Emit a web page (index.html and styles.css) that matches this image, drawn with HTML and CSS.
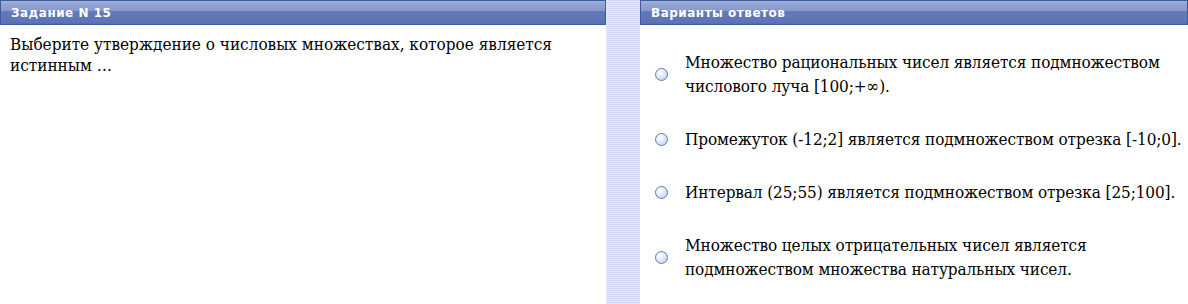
FILE: index.html
```html
<!DOCTYPE html>
<html lang="ru">
  <head>
    <meta charset="UTF-8" />
    <title>Задание N 15</title>
    <link rel="stylesheet" href="styles.css">
  </head>
  <body>
    <div class="test">
      <section class="panel task">
        <div class="panel-title">Задание N 15</div>
        <p class="question">
          Выберите утверждение о числовых множествах, которое является
          истинным …
        </p>
      </section>

      <div class="divider"></div>

      <section class="panel answers">
        <div class="panel-title">Варианты ответов</div>
        <ul class="options">
          <li class="option">
            <span class="radio"></span>
            <span class="option-text">Множество рациональных чисел является подмножеством числового луча [100;+∞).</span>
          </li>
          <li class="option">
            <span class="radio"></span>
            <span class="option-text">Промежуток (-12;2] является подмножеством отрезка [-10;0].</span>
          </li>
          <li class="option">
            <span class="radio"></span>
            <span class="option-text">Интервал (25;55) является подмножеством отрезка [25;100].</span>
          </li>
          <li class="option">
            <span class="radio"></span>
            <span class="option-text">Множество целых отрицательных чисел является подмножеством множества натуральных чисел.</span>
          </li>
        </ul>
      </section>
    </div>
  </body>
</html>
```

FILE: styles.css
```css
/* Test page */
* {
  margin: 0;
  padding: 0;
  box-sizing: border-box;
}

body {
  background: #fff;
  color: #000;
  font-family: 'DejaVu Serif Condensed', 'DejaVu Serif', serif;
}

.test {
  display: flex;
  height: 304px;
}

.panel {
  display: flex;
  flex-direction: column;
}

.task {
  width: 606px;
}

.answers {
  flex: 1;
}

/* Header bar */
.panel-title {
  height: 25px;
  padding: 5px 0 0 10px;
  border: 1px solid #3b5c9f;
  background: linear-gradient(#a3afda 0, #93a2d3 4px, #8798cf 10px, #6579b8 10px, #5f74b4 21px, #566cae 100%);
  color: #fff;
  font-family: 'DejaVu Sans', Verdana, sans-serif;
  font-size: 12px;
  line-height: 14px;
  font-weight: bold;
  letter-spacing: 0.5px;
}

.question {
  padding: 9px 10px 0;
  font-size: 17px;
  line-height: 21px;
}

/* Striped gap between panels */
.divider {
  width: 34px;
  background: repeating-linear-gradient(#d5dcf5 0, #d5dcf5 1px, #e3e7f8 1px, #e3e7f8 2px);
}

/* Answer list */
.options {
  list-style: none;
  padding: 25px 0 0 15px;
  display: flex;
  flex-direction: column;
  gap: 29px;
}

.option {
  display: flex;
  align-items: center;
  gap: 17px;
}

.option-text {
  flex: 1;
  font-size: 17px;
  line-height: 24px;
  letter-spacing: -0.1px;
}

.radio {
  width: 13px;
  height: 13px;
  flex: none;
  border-radius: 50%;
  border: 1px solid #5a80c2;
  background: radial-gradient(circle at 35% 32%, #ffffff 0, #eef2fa 30%, #b7c8e8 100%);
}
```
